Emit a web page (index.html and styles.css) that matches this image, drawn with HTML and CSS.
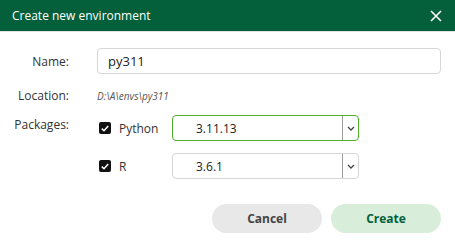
FILE: index.html
```html
<!DOCTYPE html>
<html>
  <head>
    <meta charset="UTF-8" />
    <title>Create new environment</title>
    <link rel="stylesheet" href="styles.css">
  </head>
  <body>
    <div class="dialog">
      <div class="header">
        <span class="title">Create new environment</span>
        <svg class="close" width="12" height="12" viewBox="0 0 12 12">
          <path d="M1 1 L11 11 M11 1 L1 11" stroke="white" stroke-width="1.6" fill="none" />
        </svg>
      </div>

      <div class="form">
        <label class="label name-label">Name:</label>
        <input class="text-input" type="text" value="py311" />

        <label class="label location-label">Location:</label>
        <div class="location">D:\A\envs\py311</div>

        <label class="label packages-label">Packages:</label>
        <div class="packages">
          <div class="package">
            <span class="check">
              <svg width="8" height="7" viewBox="0 0 8 7"><path d="M0.8 3.6 L3 5.7 L7.2 1" stroke="white" stroke-width="1.5" fill="none" /></svg>
            </span>
            <span class="pkg-name">Python</span>
            <div class="select active">
              <span class="select-value">3.11.13</span>
              <span class="select-arrow">
                <svg width="8" height="5" viewBox="0 0 8 5"><path d="M1 1 L4 4 L7 1" stroke="#444" stroke-width="1.3" fill="none" /></svg>
              </span>
            </div>
          </div>
          <div class="package">
            <span class="check">
              <svg width="8" height="7" viewBox="0 0 8 7"><path d="M0.8 3.6 L3 5.7 L7.2 1" stroke="white" stroke-width="1.5" fill="none" /></svg>
            </span>
            <span class="pkg-name">R</span>
            <div class="select">
              <span class="select-value">3.6.1</span>
              <span class="select-arrow">
                <svg width="8" height="5" viewBox="0 0 8 5"><path d="M1 1 L4 4 L7 1" stroke="#444" stroke-width="1.3" fill="none" /></svg>
              </span>
            </div>
          </div>
        </div>
      </div>

      <div class="buttons">
        <button class="btn cancel">Cancel</button>
        <button class="btn create">Create</button>
      </div>
    </div>
  </body>
</html>
```

FILE: styles.css
```css
body {
  margin: 0;
  background-color: white;
  font-family: "Open Sans", sans-serif;
  color: #333;
}

.dialog {
  width: 455px;
  height: 248px;
  display: flex;
  flex-direction: column;
}

.header {
  height: 32px;
  background-color: #03603a;
  border-bottom: 1px solid #e2e2e2;
  display: flex;
  align-items: center;
  justify-content: space-between;
  padding: 0 13px 0 12px;
  box-sizing: border-box;
}

.title {
  color: white;
  font-size: 12px;
}

.form {
  display: grid;
  grid-template-columns: 69px 1fr;
  column-gap: 28px;
  padding: 16px 14px 0 0;
  align-items: center;
}

.label {
  text-align: right;
  font-size: 12px;
  color: #333;
}

.text-input {
  height: 26px;
  box-sizing: border-box;
  border: 1px solid #d6d6d6;
  border-radius: 4px;
  padding: 0 10px;
  font-family: "Open Sans", sans-serif;
  font-size: 13px;
  color: #222;
  outline: none;
}

.location-label {
  margin-top: 13px;
}

.location {
  margin-top: 13px;
  font-size: 10px;
  font-style: italic;
  color: #555;
}

.packages-label {
  align-self: start;
  margin-top: 12px;
}

.packages {
  display: flex;
  flex-direction: column;
  gap: 12px;
  margin-top: 11px;
}

.package {
  display: flex;
  align-items: center;
}

.check {
  width: 12px;
  height: 12px;
  margin-left: 2px;
  background-color: #111;
  border-radius: 2px;
  display: flex;
  align-items: center;
  justify-content: center;
}

.pkg-name {
  width: 53px;
  margin-left: 8px;
  font-size: 12px;
  color: #333;
}

.select {
  width: 187px;
  height: 26px;
  box-sizing: border-box;
  border: 1px solid #d6d6d6;
  border-radius: 4px;
  display: flex;
  align-items: center;
}

.select.active {
  border-color: #4caf2e;
}

.select-value {
  flex: 1;
  padding-left: 23px;
  font-size: 12px;
  color: #222;
}

.select-arrow {
  width: 15px;
  height: 100%;
  border-left: 1px solid #9a9a9a;
  display: flex;
  align-items: center;
  justify-content: center;
}

.buttons {
  display: flex;
  justify-content: flex-end;
  gap: 9px;
  padding: 25px 14px 0 0;
}

.btn {
  width: 110px;
  height: 29px;
  border: none;
  border-radius: 15px;
  font-family: "Open Sans", sans-serif;
  font-weight: bold;
  font-size: 12px;
}

.cancel {
  background-color: #e8e8e8;
  color: #444;
}

.create {
  background-color: #d8eedb;
  color: #03603a;
}
```
